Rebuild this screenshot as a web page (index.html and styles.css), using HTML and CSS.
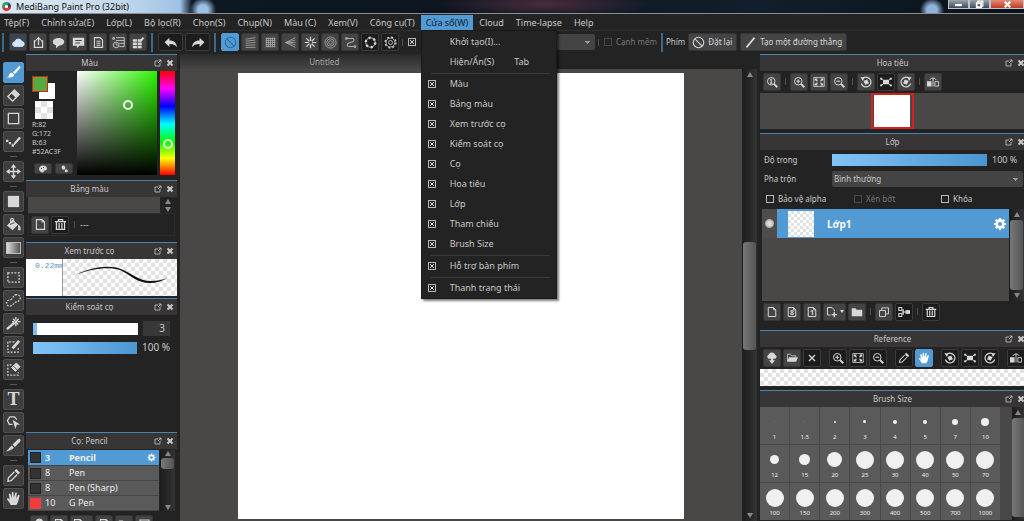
FILE: index.html
```
<!DOCTYPE html>
<html lang="vi">
<head>
    <meta charset="utf-8">
    <title>MediBang Paint Pro (32bit)</title>
    <link rel="stylesheet" href="styles.css">
</head>
<body>
    <!-- icon set -->
    <svg class="sprite" aria-hidden="true">
        <symbol id="i-cloud" viewBox="0 0 16 16"><path fill="currentColor" d="M4 13a3 3 0 0 1-.5-6A4.500 4.500 0 0 1 12 6.500 3.300 3.300 0 0 1 12.500 13z"/></symbol>
        <symbol id="i-share" viewBox="0 0 16 16"><path stroke-width="1.500" d="M5 6H3v8h10V6h-2M8 11V2M5 5l3-3 3 3"/></symbol>
        <symbol id="i-bubble" viewBox="0 0 16 16"><path fill="currentColor" stroke="none" d="M8 2.500c4 0 7 2 7 4.700S12 12 8.500 12L5 15v-3.500C2.500 10.800 1 9.200 1 7.200 1 4.500 4 2.500 8 2.500z"/></symbol>
        <symbol id="i-comment" viewBox="0 0 16 16"><path fill="currentColor" stroke="none" fill-rule="evenodd" d="M1 2h14v10H9l-3 3v-3H1zM4 5v1.300h8V5zM4 8v1.300h6V8z"/></symbol>
        <symbol id="i-doc" viewBox="0 0 16 16"><path stroke-width="1.300" d="M3 2h7l3 3v9H3zM5.500 6.500h5M5.500 9h5M5.500 11.500h5"/></symbol>
        <symbol id="i-list" viewBox="0 0 16 16"><path d="M5 2h10v11H9M1 2h2v2H1zM5 5.500h10M9 9h6"/><circle cx="5" cy="11" r="3.500"/><path d="M5 9v2h2"/></symbol>
        <symbol id="i-gridpen" viewBox="0 0 16 16"><path fill="currentColor" stroke="none" d="M1 4h5v3H1zM7 4h4v3H7zM1 8h5v3H1zM7 8h5v3H7zM1 12h5v3H1zM7 12h5v3H7z"/><path stroke-width="2.500" d="M10 7l4-5"/></symbol>
        <symbol id="i-undo" viewBox="0 0 20 16"><path fill="currentColor" stroke="none" d="M8 2v3.500c6 0 9 3 9.500 8.500C15.500 11 13 10 8 10v3.500L2 7.700z"/></symbol>
        <symbol id="i-redo" viewBox="0 0 20 16"><path fill="currentColor" stroke="none" d="M12 2v3.500c-6 0-9 3-9.500 8.500C4.500 11 7 10 12 10v3.500l6-5.800z"/></symbol>
        <symbol id="i-ban" viewBox="0 0 16 16"><circle cx="8" cy="8" r="6.500" stroke-width="1.300"/><path stroke-width="1.300" d="M3.500 3.500l9 9"/></symbol>
        <symbol id="i-lines" viewBox="0 0 16 16"><path d="M2 4l12-2M2 6.500l12-1.500M2 9l12-1M2 11.500l12-.5M2 14h12"/></symbol>
        <symbol id="i-mesh" viewBox="0 0 16 16"><path d="M3 2v12M5.500 2v12M8 2v12M10.500 2v12M13 2v12M2 3h12M2 5.500h12M2 8h12M2 10.500h12M2 13h12"/></symbol>
        <symbol id="i-vanish" viewBox="0 0 16 16"><path d="M14 2L2 8l12 6M14 5L2 8l12 3M2 8h12"/></symbol>
        <symbol id="i-radial" viewBox="0 0 16 16"><path stroke-width="1.500" d="M8 1v5M8 10v5M1 8h5M10 8h5M3 3l3.500 3.500M9.500 9.500L13 13M13 3L9.500 6.500M6.500 9.500L3 13"/></symbol>
        <symbol id="i-rings" viewBox="0 0 16 16"><circle cx="8" cy="8" r="6.800"/><circle cx="8" cy="8" r="4.500"/><circle cx="8" cy="8" r="2.200"/></symbol>
        <symbol id="i-curve" viewBox="0 0 16 16"><path stroke-width="1.300" d="M3 3h7c3 0 3 4 0 4.500L6 8.500c-3 1-2.500 4.500 0 4.500h7"/><path fill="currentColor" d="M2 2h2v2H2zM12.500 12h2v2h-2z"/></symbol>
        <symbol id="i-dotring" viewBox="0 0 16 16"><circle cx="8" cy="8" r="5.800"/><circle cx="8" cy="8" r="5.800" stroke-width="3" stroke-dasharray="2.500 3.570"/></symbol>
        <symbol id="i-cog" viewBox="0 0 16 16"><circle cx="8" cy="8" r="5.500"/><circle cx="8" cy="8" r="2.500"/><circle cx="8" cy="8" r="6.700" stroke-width="1.500" stroke-dasharray="2.600 2.660"/></symbol>
        <symbol id="i-gear" viewBox="0 0 16 16"><circle cx="8" cy="8" r="3.800" stroke-width="3"/><path stroke-width="2.500" d="M8 1v3M8 12v3M1 8h3M12 8h3M3 3l2 2M11 11l2 2M13 3l-2 2M5 11l-2 2"/></symbol>
        <symbol id="i-slash" viewBox="0 0 16 16"><path stroke-width="2" d="M3 14L13 2"/></symbol>
        <symbol id="i-popout" viewBox="0 0 16 16"><path stroke-width="1.600" d="M8 4H2v10h10V8M9 2h5v5M14 2L8 8"/></symbol>
        <symbol id="i-close" viewBox="0 0 16 16"><path stroke-width="4" d="M3 3l10 10M13 3L3 13"/></symbol>
        <symbol id="i-x" viewBox="0 0 16 16"><path stroke-width="1.800" d="M4 4l8 8M12 4l-8 8"/></symbol>
        <symbol id="i-brush" viewBox="0 0 16 16"><path fill="currentColor" stroke="none" d="M15 1.500c.8.800.3 1.500-.4 2.200L9.500 9.500 7.500 7.600 13 2c.7-.7 1.300-1.200 2-.5zM6.800 8.500l2 2C8.500 13 5 14 1 13c2-.5 2-1.500 2.500-3 .5-1.300 2-2 3.300-1.500z"/></symbol>
        <symbol id="i-eraser" viewBox="0 0 16 16"><path fill="currentColor" stroke="none" d="M9 2l5 5-3.500 3.500-5-5z"/><path stroke-width="1.500" d="M9 2l5 5-7 7-5-5z"/></symbol>
        <symbol id="i-rect" viewBox="0 0 16 16"><path stroke-width="1.400" d="M2.500 2.500h11v11h-11z"/></symbol>
        <symbol id="i-dotpen" viewBox="0 0 16 16"><path fill="currentColor" stroke="none" d="M0 6h2.500v2.500H0zM3 8.500h2.500V11H3zM6 11h2.500v2.500H6zM8 10l6-7 2 1.500L9 12z"/></symbol>
        <symbol id="i-move" viewBox="0 0 16 16"><path stroke-width="1.500" d="M8 2v12M2 8h12"/><path fill="currentColor" stroke="none" d="M8 0l3 4H5zM8 16l3-4H5zM0 8l4-3v6zM16 8l-4-3v6z"/></symbol>
        <symbol id="i-fillrect" viewBox="0 0 16 16"><path fill="currentColor" stroke="none" d="M2 2h12v12H2z"/></symbol>
        <symbol id="i-bucket" viewBox="0 0 16 16"><path stroke-width="1.300" d="M5 7V3c0-2 3-2 3 0v3"/><path fill="currentColor" stroke="none" d="M7 3l6 5-6 6-6-5zM13 8c2 1 3 3 2.500 6H13z"/><path stroke="#444" d="M4 8l5-2"/></symbol>
        <symbol id="i-marquee" viewBox="0 0 16 16"><path stroke-width="1.400" stroke-dasharray="2 1.500" d="M2 3h12v10H2z"/></symbol>
        <symbol id="i-lasso" viewBox="0 0 16 16"><path stroke-width="1.200" stroke-dasharray="2 1.300" d="M10 2c3-1 5.500 1 5 4-.5 3-3 3-5 4s-3 4-6 4c-3 0-4-3-3-5s4-1 5.500-3S8 3 10 2z"/></symbol>
        <symbol id="i-wand" viewBox="0 0 16 16"><path stroke-width="2.500" d="M1 14l8-7"/><path stroke-width="1.400" d="M10.500 1v3M10.500 8v3M6.500 6h2M12.500 6h3M13.500 3l-5 5.500M7.500 3l5.500 6"/></symbol>
        <symbol id="i-selpen" viewBox="0 0 16 16"><path stroke-width="1.300" stroke-dasharray="2 1.500" d="M9 3H2v11h11V9"/><path stroke-width="3" d="M7 10l7-8"/></symbol>
        <symbol id="i-selerase" viewBox="0 0 16 16"><path stroke-width="1.300" stroke-dasharray="2 1.500" d="M6 3H2v11h11v-3"/><path fill="currentColor" d="M11 1l4 4-5 5-4-4z"/><path stroke="#444" d="M8 4.500l4 4"/></symbol>
        <symbol id="i-shape" viewBox="0 0 16 16"><path stroke-width="1.300" d="M7 10L3.500 10 1.500 6 4 2l5 0 2.500 3"/><path fill="currentColor" stroke="none" d="M7 5l8 5-3.500.5L10 15z"/></symbol>
        <symbol id="i-knife" viewBox="0 0 16 16"><path fill="currentColor" stroke="none" d="M15 1c1 1 .5 2 0 3L9.500 9.500 7 7l5.500-5.500C13.500.5 14.500.5 15 1zM6 8l2.500 2.500C6 13 3 14 0 14.500z"/></symbol>
        <symbol id="i-dropper" viewBox="0 0 16 16"><path fill="currentColor" stroke="none" d="M11 1l4 4-2 2-4-4z"/><path stroke-width="1.400" d="M9 4L2.500 10.500 2 14l3.500-.5L12 7"/></symbol>
        <symbol id="i-hand" viewBox="0 0 16 16"><path fill="currentColor" stroke="none" d="M5 15C4 12 2 10.500 1 8.500c0-1 1.500-1 3 1L3 3.500C3 2.300 4.500 2.300 4.800 3.500L6 7.500 6.200 1.800c0-1.200 1.700-1.200 1.800 0L8.300 7.300 9.800 2c.3-1.200 1.900-.8 1.700.4L10.800 8l2-3.500c.6-1 2-.3 1.600.8C13.500 8 13.500 12 11 15z"/></symbol>
        <symbol id="i-palette" viewBox="0 0 16 16"><path fill="currentColor" stroke="none" fill-rule="evenodd" d="M8 1c5 0 8 2 8 6s-3 4-5 4-1 4-3 4c-5 0-8-4-8-7s3-7 8-7zM4 6v2h2V6zM8 4v2h2V4z"/></symbol>
        <symbol id="i-wheel" viewBox="0 0 16 16"><path fill="currentColor" stroke="none" d="M6 1a4.500 4.500 0 0 1 3 8A4 4 0 1 1 6 1z"/><circle cx="12.500" cy="11.500" r="3" fill="currentColor" stroke="none"/></symbol>
        <symbol id="i-page" viewBox="0 0 16 16"><path stroke-width="1.300" d="M3 2h7l3 3v9H3zM10 2v3h3"/></symbol>
        <symbol id="i-pageplus" viewBox="0 0 16 16"><path stroke-width="1.300" d="M6 12H2V2h6l3 3v2"/><path stroke-width="1.800" d="M11 8v7M7.500 11.500h7"/></symbol>
        <symbol id="i-trash" viewBox="0 0 16 16"><path stroke-width="1.600" d="M1 4.500h14M5.500 4V2h5v2M3 5v9h10V5M6.300 6v7M9.700 6v7"/></symbol>
        <symbol id="i-zoomin" viewBox="0 0 16 16"><circle cx="7" cy="7" r="5" stroke-width="1.300"/><path stroke-width="1.500" d="M7 4.500v5M4.500 7h5"/><path stroke-width="2.500" d="M10.500 10.500L15 15"/></symbol>
        <symbol id="i-zoomout" viewBox="0 0 16 16"><circle cx="7" cy="7" r="5" stroke-width="1.300"/><path stroke-width="1.500" d="M4.500 7h5"/><path stroke-width="2.500" d="M10.500 10.500L15 15"/></symbol>
        <symbol id="i-zoomone" viewBox="0 0 16 16"><circle cx="7" cy="7" r="5" stroke-width="1.300"/><path stroke-width="1.400" d="M5.500 5.500L7 4.500v5M5.500 9.500h3"/><path stroke-width="2.500" d="M10.500 10.500L15 15"/></symbol>
        <symbol id="i-fit" viewBox="0 0 16 16"><path d="M1 2h14v12H1z"/><path stroke-width="1.500" d="M3 6V4h3M10 4h3v2M13 10v2h-3M6 12H3v-2M3.500 4.500L6 7M12.500 4.500L10 7M3.500 11.500L6 9M12.500 11.500L10 9"/></symbol>
        <symbol id="i-rotl" viewBox="0 0 16 16"><path stroke-width="1.600" d="M4 3A6.500 6.500 0 1 1 1.800 10"/><path fill="currentColor" stroke="none" d="M.5 1.500l5.500 0-2 5zM4.500 6.500l5-2 2.500 5-5 2z"/></symbol>
        <symbol id="i-rotr" viewBox="0 0 16 16"><path stroke-width="1.600" d="M12 3A6.500 6.500 0 1 0 14.200 10"/><path fill="currentColor" stroke="none" d="M15.500 1.500l-5.500 0 2 5zM11.500 6.500l-5-2-2.500 5 5 2z"/></symbol>
        <symbol id="i-reset" viewBox="0 0 16 16"><path fill="currentColor" stroke="none" d="M4 5h8v6H4z"/><path stroke-width="1.400" d="M1 3l2.500 2M15 3l-2.500 2M1 13l2.500-2M15 13l-2.500-2M1 5V3h2M15 5V3h-2M1 11v2h2M15 11v2h-2"/></symbol>
        <symbol id="i-flip" viewBox="0 0 16 16"><path fill="currentColor" stroke="none" d="M0 7h6v7H0z"/><path d="M10.500 7.500h5v6h-5zM4 5c1-3 7-3 8 0M8 2v12" stroke-width="1.200"/></symbol>
        <symbol id="i-folder" viewBox="0 0 16 16"><path fill="currentColor" stroke="none" d="M1 3h5l1.500 2H15v8.500H1z"/></symbol>
        <symbol id="i-open" viewBox="0 0 16 16"><path d="M2 12V3h4l1.500 2H13v2"/><path fill="currentColor" stroke="none" d="M4 7h12l-2.500 6H1.500z"/></symbol>
        <symbol id="i-copy" viewBox="0 0 16 16"><path stroke-width="1.200" d="M2 6h8v8H2zM5 5.500V2.500h9v8h-3.500"/></symbol>
        <symbol id="i-merge" viewBox="0 0 16 16"><path stroke-width="1.400" d="M1 2h4v4H1zM1 10h4v4H1zM5 8h5M7 4v8"/><path fill="currentColor" stroke="none" d="M10 5.500h6v5h-6z"/></symbol>
        <symbol id="i-cloudup" viewBox="0 0 16 16"><path fill="currentColor" stroke="none" d="M3.500 9a3 3 0 0 1 0-5.500C5-.3 11-.3 12 3.500A3 3 0 0 1 12.500 9z"/><path fill="currentColor" stroke="none" d="M6.500 8h3v3H12l-4 5-4-5h2.500z"/></symbol>
        <symbol id="i-min" viewBox="0 0 16 16"><path stroke-width="4" d="M2 9h12"/></symbol>
        <symbol id="i-restore" viewBox="0 0 16 16"><path stroke-width="2" d="M5 4V2h9v9h-2"/><path stroke-width="3" d="M3 5.500h8v7H3z"/></symbol>
    </svg>

    <header class="titlebar">
        <span class="app-logo"></span>
        <h1>MediBang Paint Pro (32bit)</h1>
        <div class="window-buttons">
            <button aria-label="Minimize"><svg><use href="#i-min"/></svg></button>
            <button aria-label="Restore"><svg><use href="#i-restore"/></svg></button>
            <button class="quit" aria-label="Close"><svg><use href="#i-close"/></svg></button>
        </div>
    </header>

    <nav class="menubar">
        <button>Tệp(F)</button>
        <button>Chỉnh sửa(E)</button>
        <button>Lớp(L)</button>
        <button>Bộ lọc(R)</button>
        <button>Chọn(S)</button>
        <button>Chụp(N)</button>
        <button>Màu (C)</button>
        <button>Xem(V)</button>
        <button>Công cụ(T)</button>
        <div class="menu-anchor">
            <button class="open">Cửa sổ(W)</button>
            <div class="dropdown">
                <button class="item"><span>Khởi tạo(I)...</span></button>
                <button class="item"><span>Hiện/Ẩn(S)</span><span class="key">Tab</span></button>
                <hr>
                <label class="item"><input type="checkbox" checked>Màu</label>
                <label class="item"><input type="checkbox" checked>Bảng màu</label>
                <label class="item"><input type="checkbox" checked>Xem trước cọ</label>
                <label class="item"><input type="checkbox" checked>Kiểm soát cọ</label>
                <label class="item"><input type="checkbox" checked>Cọ</label>
                <label class="item"><input type="checkbox" checked>Hoa tiêu</label>
                <label class="item"><input type="checkbox" checked>Lớp</label>
                <label class="item"><input type="checkbox" checked>Tham chiếu</label>
                <label class="item"><input type="checkbox" checked>Brush Size</label>
                <hr>
                <label class="item"><input type="checkbox" checked>Hỗ trợ bàn phím</label>
                <hr>
                <label class="item"><input type="checkbox" checked>Thanh trạng thái</label>
            </div>
        </div>
        <button>Cloud</button>
        <button>Time-lapse</button>
        <button>Help</button>
    </nav>

    <div class="toolbar">
        <div class="group">
            <button class="btn cloud" aria-label="Cloud"><svg><use href="#i-cloud"/></svg></button>
            <button class="btn" aria-label="Share"><svg><use href="#i-share"/></svg></button>
            <button class="btn" aria-label="Chat"><svg><use href="#i-bubble"/></svg></button>
            <button class="btn" aria-label="Comment"><svg><use href="#i-comment"/></svg></button>
            <button class="btn" aria-label="Document"><svg><use href="#i-doc"/></svg></button>
            <button class="btn" aria-label="History"><svg><use href="#i-list"/></svg></button>
            <button class="btn" aria-label="Edit grid"><svg><use href="#i-gridpen"/></svg></button>
        </div>
        <div class="group">
            <button class="btn dark wide" aria-label="Undo"><svg><use href="#i-undo"/></svg></button>
            <button class="btn dark wide" aria-label="Redo"><svg><use href="#i-redo"/></svg></button>
        </div>
        <div class="group">
            <button class="btn on" aria-label="Snap off"><svg><use href="#i-ban"/></svg></button>
            <button class="btn dim" aria-label="Parallel snap"><svg><use href="#i-lines"/></svg></button>
            <button class="btn dim" aria-label="Crisscross snap"><svg><use href="#i-mesh"/></svg></button>
            <button class="btn dim" aria-label="Vanishing point snap"><svg><use href="#i-vanish"/></svg></button>
            <button class="btn" aria-label="Radial snap"><svg><use href="#i-radial"/></svg></button>
            <button class="btn dim" aria-label="Circle snap"><svg><use href="#i-rings"/></svg></button>
            <button class="btn dim" aria-label="Curve snap"><svg><use href="#i-curve"/></svg></button>
            <button class="btn dark" aria-label="Ellipse snap"><svg><use href="#i-dotring"/></svg></button>
            <button class="btn dark" aria-label="Snap settings"><svg><use href="#i-cog"/></svg></button>
            <i class="sep"></i>
            <input type="checkbox" checked aria-label="Antialias">
            <select class="brush-mode" aria-label="Mode"><option></option></select>
            <i class="sep"></i>
            <label class="check off"><input type="checkbox" disabled>Cạnh mềm</label>
        </div>
        <div class="group keys">
            <span>Phím</span>
            <button class="btn text"><svg><use href="#i-ban"/></svg>Đặt lại</button>
            <button class="btn text"><svg><use href="#i-slash"/></svg>Tạo một đường thẳng</button>
        </div>
    </div>

    <main class="workspace">
        <div class="tools">
            <button class="tool on" aria-label="Brush"><svg><use href="#i-brush"/></svg></button>
            <button class="tool" aria-label="Eraser"><svg><use href="#i-eraser"/></svg></button>
            <button class="tool" aria-label="Rectangle"><svg><use href="#i-rect"/></svg></button>
            <button class="tool" aria-label="Dot"><svg><use href="#i-dotpen"/></svg></button>
            <hr>
            <button class="tool" aria-label="Move"><svg><use href="#i-move"/></svg></button>
            <hr>
            <button class="tool" aria-label="Fill"><svg><use href="#i-fillrect"/></svg></button>
            <button class="tool" aria-label="Bucket"><svg><use href="#i-bucket"/></svg></button>
            <button class="tool" aria-label="Gradient"><span class="gradient-icon"></span></button>
            <hr>
            <button class="tool" aria-label="Select"><svg><use href="#i-marquee"/></svg></button>
            <button class="tool" aria-label="Lasso"><svg><use href="#i-lasso"/></svg></button>
            <button class="tool" aria-label="Magic wand"><svg><use href="#i-wand"/></svg></button>
            <button class="tool" aria-label="Select pen"><svg><use href="#i-selpen"/></svg></button>
            <button class="tool" aria-label="Select eraser"><svg><use href="#i-selerase"/></svg></button>
            <hr>
            <button class="tool letter">T</button>
            <button class="tool" aria-label="Operation"><svg><use href="#i-shape"/></svg></button>
            <button class="tool" aria-label="Divide"><svg><use href="#i-knife"/></svg></button>
            <hr>
            <button class="tool" aria-label="Eyedropper"><svg><use href="#i-dropper"/></svg></button>
            <button class="tool" aria-label="Hand"><svg><use href="#i-hand"/></svg></button>
        </div>

        <aside class="dock left">
            <section class="panel color">
                <header><h2>Màu</h2><button aria-label="Pop out"><svg><use href="#i-popout"/></svg></button><button aria-label="Close"><svg><use href="#i-close"/></svg></button></header>
                <div class="color-body">
                    <div class="color-info">
                        <div class="swatches"><span class="back"></span><span class="fore"></span></div>
                        <span class="clear-color checker"></span>
                        <div class="rgb">R:82<br>G:172<br>B:63<br>#52AC3F</div>
                        <div class="mini">
                            <button class="btn" aria-label="Palette"><svg><use href="#i-palette"/></svg></button>
                            <button class="btn" aria-label="Wheel"><svg><use href="#i-wheel"/></svg></button>
                        </div>
                    </div>
                    <div class="shade"><span class="ring"></span></div>
                    <input class="hue" type="range" min="0" max="100" value="72" aria-label="Hue">
                </div>
            </section>

            <section class="panel palette">
                <header><h2>Bảng màu</h2><button aria-label="Pop out"><svg><use href="#i-popout"/></svg></button><button aria-label="Close"><svg><use href="#i-close"/></svg></button></header>
                <div class="palette-row"><div class="palette-list"></div><div class="spin"><i class="up"></i><i class="down"></i></div></div>
                <div class="palette-tools">
                    <button class="btn" aria-label="Add colour"><svg><use href="#i-page"/></svg></button>
                    <button class="btn dark" aria-label="Delete colour"><svg><use href="#i-trash"/></svg></button>
                    <i class="sep"></i>
                    <span>---</span>
                </div>
            </section>

            <section class="panel preview">
                <header><h2>Xem trước cọ</h2><button aria-label="Pop out"><svg><use href="#i-popout"/></svg></button><button aria-label="Close"><svg><use href="#i-close"/></svg></button></header>
                <div class="preview-body">
                    <div class="size-mm">0.22mm</div>
                    <div class="stroke checker">
                        <svg viewBox="0 0 114 37" preserveAspectRatio="none"><path d="M12 16C26 9 46 5 58 10c14 6 18 12 30 12 6 0 11-1 17-3-6 3-12 5-18 5-13 0-18-7-30-13C45 7 28 10 12 16z"/></svg>
                    </div>
                </div>
            </section>

            <section class="panel control">
                <header><h2>Kiểm soát cọ</h2><button aria-label="Pop out"><svg><use href="#i-popout"/></svg></button><button aria-label="Close"><svg><use href="#i-close"/></svg></button></header>
                <div class="control-body">
                    <div class="slide-row"><input class="bar low" type="range" value="3" aria-label="Size"><input class="num" type="text" value="3" aria-label="Size value"></div>
                    <div class="slide-row"><input class="bar" type="range" value="100" aria-label="Opacity"><output>100 %</output></div>
                </div>
            </section>

            <section class="panel brushes">
                <header><h2>Cọ: Pencil</h2><button aria-label="Pop out"><svg><use href="#i-popout"/></svg></button><button aria-label="Close"><svg><use href="#i-close"/></svg></button></header>
                <div class="brush-box">
                    <ul>
                        <li class="on"><i></i><b>3</b><span>Pencil</span><svg><use href="#i-gear"/></svg></li>
                        <li><i></i><b>8</b><span>Pen</span></li>
                        <li><i></i><b>8</b><span>Pen (Sharp)</span></li>
                        <li><i class="red"></i><b>10</b><span>G Pen</span></li>
                    </ul>
                    <div class="scroll small"><i class="up"></i><span class="thumb"></span><i class="down"></i></div>
                </div>
                <div class="brush-tools">
                    <button class="btn" aria-label="Cloud brush"><svg><use href="#i-cloudup"/></svg></button>
                    <button class="btn" aria-label="New brush"><svg><use href="#i-page"/></svg></button>
                    <button class="btn more" aria-label="Add brush"><svg><use href="#i-page"/></svg></button>
                    <button class="btn" aria-label="Script brush"><svg><use href="#i-page"/></svg></button>
                    <button class="btn" aria-label="Folder"><svg><use href="#i-folder"/></svg></button>
                    <button class="btn" aria-label="Copy"><svg><use href="#i-rect"/></svg></button>
                </div>
            </section>
        </aside>

        <div class="document">
            <div class="tabs"><button class="tab">Untitled</button></div>
            <div class="stage">
                <div class="paper"></div>
                <div class="scroll"><i class="up"></i><span class="thumb"></span><i class="down"></i></div>
            </div>
        </div>

        <aside class="dock right">
            <section class="panel navigator">
                <header><h2>Hoa tiêu</h2><button aria-label="Pop out"><svg><use href="#i-popout"/></svg></button><button aria-label="Close"><svg><use href="#i-close"/></svg></button></header>
                <div class="row-tools">
                    <button class="btn" aria-label="Actual size"><svg><use href="#i-zoomone"/></svg></button>
                    <i class="sep"></i>
                    <button class="btn" aria-label="Zoom in"><svg><use href="#i-zoomin"/></svg></button>
                    <button class="btn" aria-label="Fit"><svg><use href="#i-fit"/></svg></button>
                    <button class="btn" aria-label="Zoom out"><svg><use href="#i-zoomout"/></svg></button>
                    <i class="sep"></i>
                    <button class="btn" aria-label="Rotate left"><svg><use href="#i-rotl"/></svg></button>
                    <button class="btn dark" aria-label="Reset rotation"><svg><use href="#i-reset"/></svg></button>
                    <button class="btn" aria-label="Rotate right"><svg><use href="#i-rotr"/></svg></button>
                    <i class="sep"></i>
                    <button class="btn" aria-label="Flip"><svg><use href="#i-flip"/></svg></button>
                </div>
                <div class="nav-view"><span class="thumbnail"></span></div>
            </section>

            <section class="panel layers">
                <header><h2>Lớp</h2><button aria-label="Pop out"><svg><use href="#i-popout"/></svg></button><button aria-label="Close"><svg><use href="#i-close"/></svg></button></header>
                <div class="field"><label for="opacity">Độ trong</label><input class="bar" id="opacity" type="range" value="100"><output>100 %</output></div>
                <div class="field"><label for="blend">Pha trộn</label><select id="blend"><option>Bình thường</option></select></div>
                <div class="checks">
                    <label class="check"><input type="checkbox">Bảo vệ alpha</label>
                    <label class="check off"><input type="checkbox" disabled>Xén bớt</label>
                    <label class="check"><input type="checkbox">Khóa</label>
                </div>
                <div class="layer-box">
                    <div class="layer-list">
                        <div class="layer">
                            <span class="eye"></span>
                            <span class="layer-thumb checker"></span>
                            <strong>Lớp1</strong>
                            <svg><use href="#i-gear"/></svg>
                        </div>
                    </div>
                    <div class="scroll"><i class="up"></i><span class="thumb"></span><i class="down"></i></div>
                </div>
                <div class="row-tools">
                    <button class="btn" aria-label="New layer"><svg><use href="#i-page"/></svg></button>
                    <button class="btn paged"><svg><use href="#i-page"/></svg><b>8</b></button>
                    <button class="btn paged"><svg><use href="#i-page"/></svg><b>1</b></button>
                    <button class="btn more" aria-label="Add"><svg><use href="#i-pageplus"/></svg></button>
                    <button class="btn" aria-label="Folder"><svg><use href="#i-folder"/></svg></button>
                    <i class="sep"></i>
                    <button class="btn" aria-label="Duplicate"><svg><use href="#i-copy"/></svg></button>
                    <button class="btn dark" aria-label="Merge"><svg><use href="#i-merge"/></svg></button>
                    <i class="sep"></i>
                    <button class="btn dark" aria-label="Delete"><svg><use href="#i-trash"/></svg></button>
                </div>
            </section>

            <section class="panel reference">
                <header><h2>Reference</h2><button aria-label="Pop out"><svg><use href="#i-popout"/></svg></button><button aria-label="Close"><svg><use href="#i-close"/></svg></button></header>
                <div class="row-tools">
                    <button class="btn" aria-label="Cloud"><svg><use href="#i-cloudup"/></svg></button>
                    <button class="btn" aria-label="Open"><svg><use href="#i-open"/></svg></button>
                    <button class="btn dark" aria-label="Clear"><svg><use href="#i-x"/></svg></button>
                    <i class="sep"></i>
                    <button class="btn dark" aria-label="Zoom in"><svg><use href="#i-zoomin"/></svg></button>
                    <button class="btn dark" aria-label="Fit"><svg><use href="#i-fit"/></svg></button>
                    <button class="btn dark" aria-label="Zoom out"><svg><use href="#i-zoomout"/></svg></button>
                    <i class="sep"></i>
                    <button class="btn dark" aria-label="Pick"><svg><use href="#i-dropper"/></svg></button>
                    <button class="btn on bright" aria-label="Hand"><svg><use href="#i-hand"/></svg></button>
                    <i class="sep"></i>
                    <button class="btn dark" aria-label="Rotate left"><svg><use href="#i-rotl"/></svg></button>
                    <button class="btn dark" aria-label="Reset rotation"><svg><use href="#i-reset"/></svg></button>
                    <button class="btn dark" aria-label="Rotate right"><svg><use href="#i-rotr"/></svg></button>
                    <i class="sep"></i>
                    <button class="btn dark" aria-label="Flip"><svg><use href="#i-flip"/></svg></button>
                </div>
                <div class="ref-view checker"></div>
            </section>

            <section class="panel sizes">
                <header><h2>Brush Size</h2><button aria-label="Pop out"><svg><use href="#i-popout"/></svg></button><button aria-label="Close"><svg><use href="#i-close"/></svg></button></header>
                <div class="size-box">
                    <div class="size-grid" id="size-grid"></div>
                    <div class="scroll"><i class="up"></i><span class="thumb"></span></div>
                </div>
            </section>
        </aside>
    </main>

    <script>
        // label and dot diameter for each brush size
        const sizes = [
            [1, 1], [1.5, 1], [2, 2], [3, 3], [4, 4], [5, 4], [7, 6], [10, 8],
            [12, 9], [15, 11], [20, 15], [25, 18], [30, 18], [40, 18], [50, 18], [70, 18],
            [100, 18], [150, 18], [200, 18], [300, 18], [400, 18], [500, 18], [700, 18], [1000, 18]
        ];
        const grid = document.getElementById('size-grid');
        sizes.forEach(([label, dot]) => {
            const cell = document.createElement('button');
            cell.innerHTML = `<span class="dot-box"><i style="width:${dot}px;height:${dot}px"></i></span>${label}`;
            if (label < 2) cell.className = 'faint';
            grid.appendChild(cell);
        });
    </script>
</body>
</html>
```
FILE: styles.css
```
* {
    box-sizing: border-box;
}

body {
    margin: 0;
    height: 100vh;
    display: flex;
    flex-direction: column;
    overflow: hidden;
    background: #232323;
    color: #c8c8c8;
    font-family: "Noto Sans", sans-serif;
    font-size: 9px;
    line-height: 12px;
}

button, input, select {
    font: inherit;
    color: inherit;
    margin: 0;
    padding: 0;
    border: 0;
    background: none;
}

h1, h2, ul {
    margin: 0;
    padding: 0;
    font-size: 9px;
    font-weight: normal;
}

.sprite {
    position: absolute;
    width: 0;
    height: 0;
}

svg {
    display: block;
    width: 13px;
    height: 13px;
    fill: none;
    stroke: currentColor;
    flex: none;
}

/* window title */
.titlebar {
    display: flex;
    flex: none;
    align-items: center;
    height: 14px;
    padding-left: 2px;
    border-bottom: 1px solid #8a8f94;
    color: #101010;
    background:
        radial-gradient(circle at 203px 10px, #9cc0e4 5px, transparent 13px),
        radial-gradient(circle at 932px 10px, #8fb3dc 5px, transparent 12px),
        radial-gradient(ellipse 110px 14px at 545px 4px, #4a2c3c, transparent),
        linear-gradient(90deg, #dce8f3, #c4d8ec 120px, #9fc2e6 180px, #0d1823 192px, #0c1520 460px, #111e2b 760px, #0a121a);
}

.app-logo {
    width: 9px;
    height: 9px;
    margin-right: 5px;
    border-radius: 50%;
    background: radial-gradient(#fff 20%, transparent 30%), conic-gradient(#3d8ec4, #2f3a42, #e0393e, #d82f44, #2fae4e, #1b9e63);
}

.window-buttons {
    display: flex;
    align-self: stretch;
    margin-left: auto;
    padding-bottom: 4px;
}

.window-buttons button {
    display: flex;
    align-items: center;
    justify-content: center;
    width: 21px;
    border: 1px solid #c0c6cc;
    border-top: 0;
    color: #fff;
    background: linear-gradient(#9aa4ae, #3d4a58);
}

.window-buttons svg {
    width: 9px;
    height: 9px;
}

.window-buttons .quit {
    width: 34px;
    background: linear-gradient(#e28a76, #c23a20);
}

/* menus */
.menubar {
    display: flex;
    flex: none;
    height: 17px;
    padding-top: 1px;
    border-bottom: 1px solid #303030;
}

.menubar > button, .menu-anchor > button {
    height: 15px;
    padding: 0 6px;
}

.menubar > button:first-child {
    padding-left: 4px;
}

.menu-anchor {
    position: relative;
}

.menu-anchor > .open {
    padding: 0 5px;
    background: #519ad3;
    color: #10202e;
}

.dropdown {
    position: absolute;
    z-index: 10;
    top: 15px;
    left: 0;
    width: 136px;
    padding: 1px 0 0;
    border: 1px solid #1a1a1a;
    background: #232323;
    box-shadow: 2px 2px 2px rgba(0, 0, 0, 0.5);
}

.dropdown .item {
    display: flex;
    align-items: center;
    width: 100%;
    height: 20px;
    padding-left: 6px;
}

.dropdown button.item {
    padding-left: 28px;
}

.dropdown .item input {
    margin-right: 14px;
}

.dropdown .key {
    margin-left: 20px;
}

.dropdown hr {
    height: 1px;
    margin: 1px 6px 0 9px;
    border: 0;
    background: #3a3a3a;
}

/* check boxes */
input[type=checkbox] {
    appearance: none;
    flex: none;
    width: 8px;
    height: 8px;
    padding: 1px;
    border: 1px solid #b8b8b8;
}

input[type=checkbox]:checked {
    background:
        linear-gradient(45deg, transparent 38%, #ddd 38% 62%, transparent 62%) content-box,
        linear-gradient(-45deg, transparent 38%, #ddd 38% 62%, transparent 62%) content-box;
}

.check {
    display: flex;
    align-items: center;
    gap: 4px;
    white-space: nowrap;
}

.check.off {
    color: #777;
}

.check.off input {
    border-color: #484848;
}

/* buttons */
.btn {
    display: flex;
    align-items: center;
    justify-content: center;
    gap: 3px;
    flex: none;
    width: 18px;
    height: 18px;
    border: 1px solid #353535;
    border-radius: 2px;
    background: #444;
    color: #d8d8d8;
}

.btn.dark {
    background: #1c1c1c;
    border-color: #3a3a3a;
}

.btn.dim {
    color: #aaa;
}

.btn.on {
    background: #519ad3;
    border-color: #519ad3;
    color: #2a6a9e;
}

.btn.on.bright {
    color: #fff;
}

.btn.cloud {
    background: #3c4650;
    color: #d5e6f8;
}

.btn.wide {
    width: 25px;
}

.btn.wide svg {
    width: 16px;
}

.btn.text {
    width: auto;
    padding: 0 4px 0 3px;
}

.btn.more {
    width: 23px;
    gap: 2px;
}

.btn.more::after {
    content: "";
    border: 2px solid transparent;
    border-top: 3px solid #d8d8d8;
    border-bottom: 0;
}

.btn.paged {
    position: relative;
}

.btn.paged b {
    position: absolute;
    inset: 3px 0 0;
    font-size: 7px;
    line-height: 12px;
}

.sep {
    width: 1px;
    height: 7px;
    background: #505050;
}

/* top toolbar */
.toolbar {
    display: flex;
    flex: none;
    align-items: center;
    height: 22px;
    padding-left: 2px;
    font-size: 8px;
}

.toolbar .group {
    display: flex;
    align-items: center;
    gap: 2px;
    height: 19px;
    margin-right: 4px;
    padding-left: 5px;
    border-left: 2px solid #3d6a8c;
}

.toolbar .sep {
    margin: 0 3px 0 1px;
}

.brush-mode {
    width: 97px;
    height: 16px;
    margin-left: 80px;
}

.toolbar .keys {
    gap: 3px;
    padding-left: 3px;
}

select {
    appearance: none;
    border-radius: 2px;
    background:
        linear-gradient(#999, #999) no-repeat right 5px top 7px / 5px 1px,
        linear-gradient(#999, #999) no-repeat right 6px top 8px / 3px 1px,
        linear-gradient(#999, #999) no-repeat right 7px top 9px / 1px 1px,
        #444;
}

/* body of the window */
.workspace {
    display: flex;
    flex: 1;
    min-height: 0;
    padding-top: 1px;
}

.tools {
    display: flex;
    flex-direction: column;
    gap: 2px;
    flex: none;
    width: 26px;
    padding: 8px 2px 0 3px;
}

.tools hr {
    width: 7px;
    height: 1px;
    margin: 2px auto;
    border: 0;
    background: #5a5a5a;
}

.tool {
    display: flex;
    align-items: center;
    justify-content: center;
    flex: none;
    height: 21px;
    border: 1px solid #505050;
    border-radius: 2px;
    background: #3e3e3e;
    color: #d8d8d8;
}

.tool svg {
    width: 15px;
    height: 15px;
}

.tool.on {
    background: #519ad3;
    border-color: #519ad3;
    color: #fff;
}

.tool.letter {
    font: bold 18px "Liberation Serif", serif;
}

.gradient-icon {
    width: 15px;
    height: 12px;
    border: 1px solid #bbb;
    background: linear-gradient(90deg, #ddd, #555);
}

/* panels */
.dock {
    display: flex;
    flex-direction: column;
    flex: none;
    min-height: 0;
    overflow: hidden;
}

.dock.left {
    width: 151px;
}

.dock.right {
    width: 264px;
}

.panel {
    flex: none;
    border-top: 1px solid #4a83ab;
}

.panel header {
    display: flex;
    align-items: center;
    gap: 4px;
    height: 16px;
    padding: 0 3px 0 3px;
    background: #373535;
}

.panel h2 {
    flex: 1;
    font-size: 8px;
    text-align: center;
}

.panel header svg {
    width: 8px;
    height: 8px;
}

.dock.right .panel header {
    margin-right: -1px;
    padding: 0 0 0 24px;
}

.checker {
    background: repeating-conic-gradient(#e2e2e2 0 25%, #fff 0 50%) 0 0 / 8px 8px;
}

/* colour panel */
.color {
    height: 126px;
}

.color-body {
    display: flex;
    gap: 3px;
    height: 104px;
    padding: 0 2px 0 6px;
}

.color-info {
    flex: 1;
    padding-top: 5px;
}

.swatches {
    display: grid;
    grid-template-columns: 7px 9px 7px;
    grid-template-rows: 7px 9px 7px;
}

.swatches .fore {
    grid-area: 1 / 1 / 3 / 3;
    border: 1px solid #e02010;
    background: #52ac3f;
}

.swatches .back {
    grid-area: 2 / 2 / 4 / 4;
    background: #fff;
}

.clear-color {
    display: block;
    width: 18px;
    height: 18px;
    margin: 2px 0 1px 3px;
    background-size: 12px 12px;
}

.rgb {
    font-size: 7px;
    line-height: 9px;
}

.mini {
    display: flex;
    gap: 3px;
    padding: 7px 0 0 2px;
}

.mini .btn {
    height: 11px;
}

.mini svg {
    width: 8px;
    height: 8px;
}

.shade {
    position: relative;
    width: 80px;
    background: linear-gradient(transparent, #000), linear-gradient(90deg, #fff, #2cf500);
}

.ring {
    position: absolute;
    left: 57%;
    top: 28%;
    width: 10px;
    height: 10px;
    border: 2px solid #e8ffe0;
    border-radius: 50%;
}

.hue {
    appearance: none;
    writing-mode: vertical-lr;
    width: 15px;
    height: 104px;
    background: linear-gradient(#f00, #f0f 17%, #00f 34%, #0ff 51%, #0f0 68%, #ff0 84%, #f00);
}

.hue::-webkit-slider-thumb {
    appearance: none;
    width: 10px;
    height: 10px;
    border: 2px solid #e8ffe0;
    border-radius: 50%;
}

/* palette panel */
.palette {
    height: 62px;
}

.palette-row {
    display: flex;
    margin: 0 2px;
}

.palette-list {
    flex: 1;
    height: 16px;
    background: #4a4846;
}

.spin {
    display: flex;
    flex-direction: column;
    align-items: center;
    justify-content: center;
    gap: 3px;
    width: 15px;
}

.up, .down {
    border: 3px solid transparent;
    border-bottom: 5px solid #888;
    border-top: 0;
}

.down {
    border-top: 5px solid #888;
    border-bottom: 0;
}

.palette-tools {
    display: flex;
    align-items: center;
    gap: 2px;
    height: 23px;
    margin: 0 2px;
    padding-left: 2px;
    border: 1px solid #2c2c2c;
}

.palette-tools .sep {
    margin: 0 3px;
}

/* preview panel */
.preview {
    height: 56px;
}

.preview-body {
    display: flex;
    height: 37px;
}

.size-mm {
    width: 37px;
    padding: 1px 0 0 9px;
    overflow: hidden;
    border-right: 1px solid #999;
    background: #fff;
    color: #5b93c4;
    font-family: "Liberation Mono", monospace;
    font-size: 8px;
}

.stroke {
    flex: 1;
}

.stroke svg {
    width: 100%;
    height: 100%;
    fill: #111;
    stroke: none;
}

/* brush control */
.control {
    height: 134px;
}

.control-body {
    display: grid;
    grid-template-columns: minmax(0, 1fr);
    gap: 4px;
    padding: 6px 7px 0 7px;
}

.slide-row {
    display: flex;
    align-items: center;
    gap: 5px;
}

.slide-row output, .num {
    flex: none;
    width: 27px;
    height: 15px;
    font-size: 10px;
    line-height: 15px;
    text-align: right;
    white-space: nowrap;
}

.num {
    padding-right: 5px;
    background: #383838;
}

.slide-row output {
    width: 28px;
}

.bar {
    appearance: none;
    flex: 1;
    min-width: 0;
    height: 12px;
    background: linear-gradient(90deg, #82c4f8, #4c95cf);
}

.bar.low {
    background: linear-gradient(90deg, #7fbdf0 4px, #fff 4px);
}

.bar::-webkit-slider-thumb {
    appearance: none;
    width: 1px;
    height: 12px;
}

/* brush list */
.brush-box {
    display: flex;
    gap: 1px;
    padding: 1px 2px 0;
}

.brush-box ul {
    flex: 1;
    list-style: none;
}

.brush-box li {
    display: flex;
    align-items: center;
    height: 15px;
    padding: 0 3px 0 2px;
    border-bottom: 1px solid #454545;
    background: #5a5a5a;
    color: #eee;
}

.brush-box li.on {
    height: 16px;
    background: #519ad3;
    font-weight: bold;
}

.brush-box li i {
    width: 11px;
    height: 11px;
    margin-right: 4px;
    border: 1px solid #222;
    background: #333;
}

.brush-box li .red {
    background: #f33c3c;
    border-color: #f33c3c;
}

.brush-box li b {
    width: 24px;
    font-weight: inherit;
}

.brush-box li span {
    flex: 1;
}

.brush-box li svg {
    width: 9px;
    height: 9px;
}

.brush-tools {
    display: flex;
    gap: 2px;
    padding: 4px 4px 0;
}

/* scroll bars */
.scroll {
    display: flex;
    flex-direction: column;
    align-items: center;
    flex: none;
    width: 15px;
    padding: 3px 0;
    background: linear-gradient(90deg, #1c1c1c, #333);
}

.scroll .thumb {
    width: 13px;
    border-radius: 3px;
    background: linear-gradient(90deg, #777, #555);
}

.scroll .down {
    margin-top: auto;
}

.scroll.small {
    padding: 1px 0;
}

.scroll.small .thumb {
    height: 11px;
    margin-top: 2px;
}

/* document */
.document {
    display: flex;
    flex-direction: column;
    flex: 1;
    min-width: 0;
    margin: 0 3px;
}

.tabs {
    display: flex;
    flex: none;
    height: 15px;
}

.tab {
    flex: 0 0 50%;
    background: linear-gradient(#2a2a2a, #454545);
    color: #aaa;
    font-size: 8px;
}

.stage {
    display: flex;
    flex: 1;
    background: #4a4846;
}

.paper {
    flex: 1;
    margin: 4px 58px 2px 58px;
    background: #fff;
}

.stage .scroll .thumb {
    height: 108px;
    margin-top: 165px;
}

/* right dock */
.row-tools {
    display: flex;
    align-items: center;
    gap: 2px;
    height: 21px;
    padding-left: 3px;
}

.row-tools .sep {
    margin: 0 2px;
}

.row-tools svg {
    width: 12px;
    height: 12px;
}

.navigator {
    height: 79px;
}

.nav-view {
    height: 36px;
    margin-top: 1px;
    background: #4a4846;
}

.thumbnail {
    display: block;
    width: 43px;
    height: 36px;
    margin: 0 auto;
    border: 2px solid #d42020;
    background: linear-gradient(#fff, #fff) no-repeat center / 36px 32px, #4a4846;
}

.layers {
    height: 197px;
    font-size: 8px;
}

.field {
    display: flex;
    align-items: center;
    gap: 5px;
    height: 18px;
    padding: 0 6px 0 4px;
}

.field label {
    width: 63px;
}

.field output {
    width: 26px;
    font-size: 9px;
    white-space: nowrap;
}

.layers header + .field {
    height: 20px;
}

.field select {
    flex: 1;
    height: 16px;
    margin-right: -5px;
    padding-left: 2px;
}

.checks {
    display: grid;
    grid-template-columns: 88px 87px auto;
    height: 21px;
    padding-left: 6px;
}

.layer-box {
    display: flex;
    height: 92px;
    padding-left: 2px;
}

.layer-list {
    flex: 1;
    background: #4a4846;
}

.layer {
    display: flex;
    align-items: center;
    height: 29px;
    padding-right: 2px;
    background: #519ad3;
    color: #fff;
}

.eye {
    width: 15px;
    height: 29px;
    margin-right: 11px;
    background: radial-gradient(circle, #ddd 2px, #aaa 4px, #4f4d4b 5px);
}

.layer-thumb {
    width: 26px;
    height: 26px;
    background-size: 6px 6px;
}

.layer strong {
    flex: 1;
    padding-left: 13px;
    font-size: 10px;
}

.layer svg {
    width: 14px;
    height: 14px;
}

.layer-box .thumb {
    flex: 1;
    margin: 3px 0;
}

.reference {
    height: 60px;
}

.ref-view {
    height: 17px;
    margin-top: 1px;
}

.size-box {
    display: flex;
    background: #4a4846;
}

.size-grid {
    display: grid;
    flex: 1;
    grid-template-columns: repeat(8, 1fr);
    grid-auto-rows: 37px;
    gap: 1px;
    margin-right: 12px;
}

.size-grid button {
    background: #5a5a5a;
    color: #f0f0f0;
    font-size: 6px;
    line-height: 8px;
}

.dot-box {
    display: flex;
    align-items: center;
    justify-content: center;
    height: 23px;
}

.dot-box i {
    border-radius: 50%;
    background: #f0f0f0;
}

.faint .dot-box i {
    background: #777;
}

.size-box .scroll {
    width: 12px;
}

.size-box .thumb {
    flex: 1;
    margin-top: 3px;
}
```
